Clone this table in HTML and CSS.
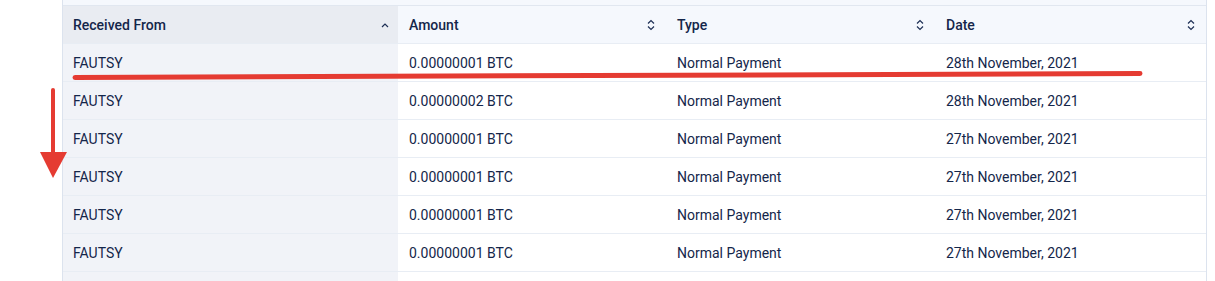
FILE: index.html
```html
<!DOCTYPE html>
<html>
<head>
<meta charset="utf-8">
<link rel="stylesheet" href="styles.css">
</head>
<body>
<div class="page">
  <div class="wrap">
    <table class="tbl">
      <colgroup>
        <col class="c1"><col class="c2"><col class="c3"><col class="c4">
      </colgroup>
      <thead>
        <tr>
          <th class="first"><div class="th"><span>Received From</span>
            <svg class="sort" width="10" height="12" viewBox="0 0 10 12"><path d="M2 8 L5 5 L8 8" fill="none" stroke="#1d2f55" stroke-width="1.2"/></svg></div></th>
          <th><div class="th"><span>Amount</span>
            <svg class="sort" width="10" height="14" viewBox="0 0 10 14"><path d="M2 5.5 L5 2.5 L8 5.5 M2 8.5 L5 11.5 L8 8.5" fill="none" stroke="#1d2f55" stroke-width="1.2"/></svg></div></th>
          <th><div class="th"><span>Type</span>
            <svg class="sort" width="10" height="14" viewBox="0 0 10 14"><path d="M2 5.5 L5 2.5 L8 5.5 M2 8.5 L5 11.5 L8 8.5" fill="none" stroke="#1d2f55" stroke-width="1.2"/></svg></div></th>
          <th><div class="th"><span>Date</span>
            <svg class="sort" width="10" height="14" viewBox="0 0 10 14"><path d="M2 5.5 L5 2.5 L8 5.5 M2 8.5 L5 11.5 L8 8.5" fill="none" stroke="#1d2f55" stroke-width="1.2"/></svg></div></th>
        </tr>
      </thead>
      <tbody>
        <tr><td class="first">FAUTSY</td><td>0.00000001 BTC</td><td>Normal Payment</td><td>28th November, 2021</td></tr>
        <tr><td class="first">FAUTSY</td><td>0.00000002 BTC</td><td>Normal Payment</td><td>28th November, 2021</td></tr>
        <tr><td class="first">FAUTSY</td><td>0.00000001 BTC</td><td>Normal Payment</td><td>27th November, 2021</td></tr>
        <tr><td class="first">FAUTSY</td><td>0.00000001 BTC</td><td>Normal Payment</td><td>27th November, 2021</td></tr>
        <tr><td class="first">FAUTSY</td><td>0.00000001 BTC</td><td>Normal Payment</td><td>27th November, 2021</td></tr>
        <tr><td class="first">FAUTSY</td><td>0.00000001 BTC</td><td>Normal Payment</td><td>27th November, 2021</td></tr>
        <tr><td class="first"></td><td></td><td></td><td></td></tr>
      </tbody>
    </table>
  </div>
  <svg class="annot" width="1215" height="281" viewBox="0 0 1215 281">
    <path d="M75 77.5 L1140 73.5" stroke="#e53b32" stroke-width="5" stroke-linecap="round" fill="none"/>
    <path d="M53 90 L53 156" stroke="#e53b32" stroke-width="4" stroke-linecap="round" fill="none"/>
    <path d="M40 152 L67 152 L53 178 Z" fill="#e53b32"/>
  </svg>
</div>
</body>
</html>
```

FILE: styles.css
```css
html, body {
  margin: 0;
  padding: 0;
  background: #ffffff;
  font-family: Roboto, "Liberation Sans", Arial, sans-serif;
}
.page {
  position: relative;
  width: 1215px;
  height: 281px;
  overflow: hidden;
}
.wrap {
  margin-left: 62px;
  width: 1143px;
  padding-top: 5px;
  background: #f5f8fd;
  border-left: 1px solid #dce3ee;
  border-right: 1px solid #dce3ee;
}
.tbl {
  width: 1143px;
  border-collapse: collapse;
  table-layout: fixed;
  border-top: 1px solid #e1e7f0;
  color: #14264a;
  font-size: 14px;
}
.c1 { width: 335px; }
.c2 { width: 268px; }
.c3 { width: 269px; }
.c4 { width: 271px; }
th {
  height: 37px;
  padding: 0 10px 0 11px;
  background: #f5f8fd;
  font-weight: 500;
  text-align: left;
  border-bottom: 1px solid #e8edf4;
}
th.first {
  background: #e9ecf2;
  padding-left: 10px;
}
.th {
  display: flex;
  align-items: center;
  justify-content: space-between;
}
.sort {
  display: block;
}
th.first .sort {
  margin-right: -2px;
}
td {
  height: 37px;
  padding: 0 10px 0 11px;
  background: #ffffff;
  border-bottom: 1px solid #e8edf4;
  white-space: nowrap;
}
td.first {
  background: #f1f3f8;
  padding-left: 10px;
}
.annot {
  position: absolute;
  left: 0;
  top: 0;
  pointer-events: none;
}
```
